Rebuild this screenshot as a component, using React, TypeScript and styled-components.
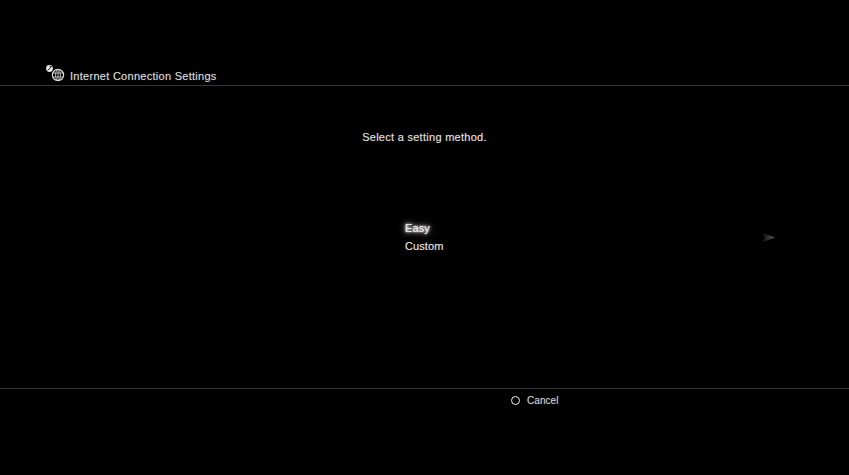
import React from 'react';
import styled, { createGlobalStyle } from 'styled-components';

const GlobalStyle = createGlobalStyle`
  html, body {
    margin: 0;
    padding: 0;
    background: #000;
    overflow: hidden;
  }
`;

const Screen = styled.div`
  width: 849px;
  height: 475px;
  display: flex;
  flex-direction: column;
  background: #000;
  color: #e8e8e8;
  font-family: "Liberation Sans", Arial, sans-serif;
  font-size: 11px;
  letter-spacing: 0.28px;
  text-shadow: 0 0 1px rgba(255, 255, 255, 0.35);
`;

const Header = styled.header`
  height: 86px;
  box-sizing: border-box;
  display: flex;
  align-items: flex-end;
  gap: 1px;
  padding: 0 0 2px 45px;
  border-bottom: 1px solid #333333;
  flex: none;
`;

const Title = styled.h1`
  margin: 0;
  font: inherit;
  line-height: 13px;
  color: #d8d8d8;
`;

const Body = styled.main`
  flex: 1;
  display: flex;
  flex-direction: column;
`;

const Prompt = styled.p`
  margin: 0;
  padding-top: 45px;
  text-align: center;
  line-height: 13px;
  color: #e0e0e0;
`;

const MenuRow = styled.div`
  display: flex;
  justify-content: space-between;
  align-items: flex-start;
  padding: 78px 74px 0 405px;
`;

const Menu = styled.ul`
  list-style: none;
  margin: 0;
  padding: 0;
  display: flex;
  flex-direction: column;
  gap: 5px;
  letter-spacing: 0.1px;
`;

const MenuItem = styled.li<{ $focused?: boolean }>`
  line-height: 13px;
  color: ${props => (props.$focused ? '#eeeeee' : '#e4e4e4')};
  text-shadow: ${props =>
    props.$focused
      ? '0 0 2px #fff, 0 0 4px rgba(255, 255, 255, 0.9), 0 0 8px rgba(255, 255, 255, 0.7)'
      : '0 0 1px rgba(255, 255, 255, 0.35)'};
`;

const NextArrow = styled.svg`
  margin-top: 10px;
  flex: none;
`;

const Footer = styled.footer`
  height: 87px;
  box-sizing: border-box;
  flex: none;
  border-top: 1px solid #333333;
  display: flex;
  align-items: flex-start;
  gap: 7px;
  padding: 5px 0 0 511px;
`;

const CircleMark = styled.span`
  width: 9px;
  height: 9px;
  box-sizing: border-box;
  margin-top: 2px;
  border: 1.5px solid #f0f0f0;
  border-radius: 50%;
`;

const FooterLabel = styled.span`
  line-height: 13px;
  font-size: 10px;
  letter-spacing: 0.05px;
  color: #cfcfcf;
`;

const NetworkIcon = () => (
  <svg width="24" height="20" viewBox="0 0 24 20" fill="none">
    <circle cx="4.5" cy="5.5" r="3.4" fill="#e8e8e8" />
    <path d="M2.7 7.5 L6 4 M4.7 3.6 L6.9 3.6" stroke="#222" strokeWidth="1" />
    <circle cx="13" cy="12" r="5.6" stroke="#e0e0e0" strokeWidth="1.2" />
    <ellipse cx="13" cy="12" rx="2.4" ry="5.6" stroke="#c8c8c8" strokeWidth="0.9" />
    <path d="M7.8 10 H18.2 M7.8 14 H18.2 M13 6.4 V17.6" stroke="#c8c8c8" strokeWidth="0.9" />
  </svg>
);

const App: React.FC = () => (
  <>
    <GlobalStyle />
    <Screen>
      <Header>
        <NetworkIcon />
        <Title>Internet Connection Settings</Title>
      </Header>
      <Body>
        <Prompt>Select a setting method.</Prompt>
        <MenuRow>
          <Menu>
            <MenuItem $focused>Easy</MenuItem>
            <MenuItem>Custom</MenuItem>
          </Menu>
          <NextArrow width="14" height="11" viewBox="0 0 14 11">
            <defs>
              <linearGradient id="arrowFade" x1="0" x2="1" y1="0" y2="0">
                <stop offset="0" stopColor="#000" />
                <stop offset="1" stopColor="#606060" />
              </linearGradient>
            </defs>
            <path d="M0 0.5 L14 5.5 L0 10.5 L4 5.5 Z" fill="url(#arrowFade)" />
          </NextArrow>
        </MenuRow>
      </Body>
      <Footer>
        <CircleMark />
        <FooterLabel>Cancel</FooterLabel>
      </Footer>
    </Screen>
  </>
);

export default App;
